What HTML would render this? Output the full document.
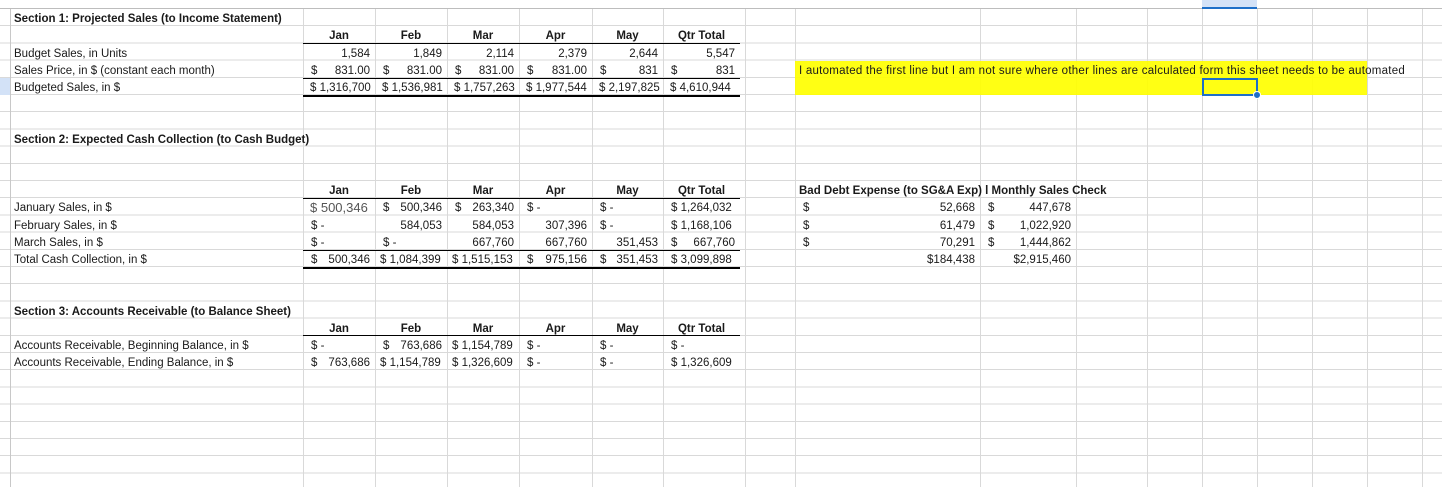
<!DOCTYPE html>
<html><head><meta charset="utf-8"><style>
*{margin:0;padding:0;box-sizing:border-box}
body{width:1442px;height:487px;overflow:hidden;background:#fff;position:relative;font-family:"Liberation Sans",sans-serif;font-size:11.5px;color:#1a1a1a}
.v{position:absolute;top:0;width:1px;height:487px;background:#d9d9d9}
.grid{position:absolute;left:0;top:9.2px;width:1442px;height:480px;background:repeating-linear-gradient(to bottom,transparent 0,transparent 16.2px,#d9d9d9 16.2px,#d9d9d9 17.2px)}
.c{position:absolute;height:17px;line-height:20px;padding:0 5px 0 8px;white-space:nowrap}
.l{padding-left:4px}
.r{text-align:right}.ctr{text-align:center;padding:0 3px}
.b{font-weight:bold}
.a{display:flex;justify-content:space-between}
.h{position:absolute;height:1px;background:#000}
</style></head><body>
<div class="grid"></div>
<div class="v" style="left:10px;background:#c8c8c8"></div>
<div class="v" style="left:303px"></div><div class="v" style="left:375px"></div><div class="v" style="left:447px"></div><div class="v" style="left:519px"></div><div class="v" style="left:592px"></div><div class="v" style="left:663px"></div><div class="v" style="left:745px"></div><div class="v" style="left:795px"></div><div class="v" style="left:980px"></div><div class="v" style="left:1076px"></div><div class="v" style="left:1147px"></div><div class="v" style="left:1202px"></div><div class="v" style="left:1257px"></div><div class="v" style="left:1312px"></div><div class="v" style="left:1367px"></div><div class="v" style="left:1422px"></div>
<div style="position:absolute;left:0;top:0;width:1442px;height:9px;background:#fff;border-bottom:1px solid #bdbdbd"></div>
<div style="position:absolute;left:1202px;top:0;width:55px;height:9px;background:#d3e2f7;border-bottom:2px solid #1e6fc8"></div>
<div style="position:absolute;left:0;top:78px;width:10px;height:17px;background:#d3e2f7"></div>
<div style="position:absolute;left:795px;top:61px;width:572px;height:34px;background:rgba(255,255,0,0.92)"></div>
<div style="position:absolute;left:1202px;top:78px;width:56px;height:18px;border:2px solid #1e6fc8"></div>
<div style="position:absolute;left:1253px;top:91px;width:8px;height:8px;border-radius:50%;background:#1e6fc8;border:1px solid #fff"></div>

<div class="c b l" style="left:10px;top:9.2px">Section 1: Projected Sales (to Income Statement)</div>
<div class="c b ctr" style="left:303px;top:26.4px;width:72px">Jan</div>
<div class="c b ctr" style="left:375px;top:26.4px;width:72px">Feb</div>
<div class="c b ctr" style="left:447px;top:26.4px;width:72px">Mar</div>
<div class="c b ctr" style="left:519px;top:26.4px;width:73px">Apr</div>
<div class="c b ctr" style="left:592px;top:26.4px;width:71px">May</div>
<div class="c b ctr" style="left:663px;top:26.4px;width:77px">Qtr Total</div>
<div class="h" style="left:303px;width:437px;top:42.6px"></div>
<div class="c l" style="left:10px;top:43.6px">Budget Sales, in Units</div>
<div class="c r" style="left:303px;top:43.6px;width:72px">1,584</div>
<div class="c r" style="left:375px;top:43.6px;width:72px">1,849</div>
<div class="c r" style="left:447px;top:43.6px;width:72px">2,114</div>
<div class="c r" style="left:519px;top:43.6px;width:73px">2,379</div>
<div class="c r" style="left:592px;top:43.6px;width:71px">2,644</div>
<div class="c r" style="left:663px;top:43.6px;width:77px">5,547</div>
<div class="c l" style="left:10px;top:60.8px">Sales Price, in $ (constant each month)</div>
<div class="c a" style="left:303px;top:60.8px;width:72px"><span>$</span><span>831.00</span></div>
<div class="c a" style="left:375px;top:60.8px;width:72px"><span>$</span><span>831.00</span></div>
<div class="c a" style="left:447px;top:60.8px;width:72px"><span>$</span><span>831.00</span></div>
<div class="c a" style="left:519px;top:60.8px;width:73px"><span>$</span><span>831.00</span></div>
<div class="c a" style="left:592px;top:60.8px;width:71px"><span>$</span><span>831</span></div>
<div class="c a" style="left:663px;top:60.8px;width:77px"><span>$</span><span>831</span></div>
<div class="c l" style="left:795px;top:60.8px;letter-spacing:0.25px">I automated the first line but I am not sure where other lines are calculated form this sheet needs to be automated</div>
<div class="h" style="left:303px;width:437px;top:77.6px"></div>
<div class="c l" style="left:10px;top:78px">Budgeted Sales, in $</div>
<div class="c" style="left:303px;top:78px;padding-left:7px">$ 1,316,700</div>
<div class="c" style="left:375px;top:78px;padding-left:7px">$ 1,536,981</div>
<div class="c" style="left:447px;top:78px;padding-left:7px">$ 1,757,263</div>
<div class="c" style="left:519px;top:78px;padding-left:7px">$ 1,977,544</div>
<div class="c" style="left:592px;top:78px;padding-left:7px">$ 2,197,825</div>
<div class="c" style="left:663px;top:78px;padding-left:7px">$ 4,610,944</div>
<div class="h" style="left:303px;width:437px;top:94.5px;height:2px"></div>

<div class="c b l" style="left:10px;top:129.6px">Section 2: Expected Cash Collection (to Cash Budget)</div>
<div class="c b ctr" style="left:303px;top:181.2px;width:72px">Jan</div>
<div class="c b ctr" style="left:375px;top:181.2px;width:72px">Feb</div>
<div class="c b ctr" style="left:447px;top:181.2px;width:72px">Mar</div>
<div class="c b ctr" style="left:519px;top:181.2px;width:73px">Apr</div>
<div class="c b ctr" style="left:592px;top:181.2px;width:71px">May</div>
<div class="c b ctr" style="left:663px;top:181.2px;width:77px">Qtr Total</div>
<div class="h" style="left:303px;width:437px;top:197.6px"></div>
<div class="c b l" style="left:795px;top:181.2px">Bad Debt Expense (to SG&amp;A Exp) l Monthly Sales Check</div>

<div class="c l" style="left:10px;top:198.4px">January Sales, in $</div>
<div class="c" style="left:303px;top:198.4px;font-size:13px;color:#555;padding-left:7px">$ 500,346</div>
<div class="c a" style="left:375px;top:198.4px;width:72px"><span>$</span><span>500,346</span></div>
<div class="c a" style="left:447px;top:198.4px;width:72px"><span>$</span><span>263,340</span></div>
<div class="c" style="left:519px;top:198.4px">$ -</div>
<div class="c" style="left:592px;top:198.4px">$ -</div>
<div class="c" style="left:663px;top:198.4px">$ 1,264,032</div>
<div class="c a" style="left:795px;top:198.4px;width:185px"><span>$</span><span>52,668</span></div>
<div class="c a" style="left:980px;top:198.4px;width:96px"><span>$</span><span>447,678</span></div>

<div class="c l" style="left:10px;top:215.6px">February Sales, in $</div>
<div class="c" style="left:303px;top:215.6px">$ -</div>
<div class="c r" style="left:375px;top:215.6px;width:72px">584,053</div>
<div class="c r" style="left:447px;top:215.6px;width:72px">584,053</div>
<div class="c r" style="left:519px;top:215.6px;width:73px">307,396</div>
<div class="c" style="left:592px;top:215.6px">$ -</div>
<div class="c" style="left:663px;top:215.6px">$ 1,168,106</div>
<div class="c a" style="left:795px;top:215.6px;width:185px"><span>$</span><span>61,479</span></div>
<div class="c a" style="left:980px;top:215.6px;width:96px"><span>$</span><span>1,022,920</span></div>

<div class="c l" style="left:10px;top:232.8px">March Sales, in $</div>
<div class="c" style="left:303px;top:232.8px">$ -</div>
<div class="c" style="left:375px;top:232.8px">$ -</div>
<div class="c r" style="left:447px;top:232.8px;width:72px">667,760</div>
<div class="c r" style="left:519px;top:232.8px;width:73px">667,760</div>
<div class="c r" style="left:592px;top:232.8px;width:71px">351,453</div>
<div class="c a" style="left:663px;top:232.8px;width:77px"><span>$</span><span>667,760</span></div>
<div class="c a" style="left:795px;top:232.8px;width:185px"><span>$</span><span>70,291</span></div>
<div class="c a" style="left:980px;top:232.8px;width:96px"><span>$</span><span>1,444,862</span></div>
<div class="h" style="left:303px;width:437px;top:249.5px"></div>

<div class="c l" style="left:10px;top:250px">Total Cash Collection, in $</div>
<div class="c a" style="left:303px;top:250px;width:72px"><span>$</span><span>500,346</span></div>
<div class="c" style="left:375px;top:250px;padding-left:5px">$ 1,084,399</div>
<div class="c" style="left:447px;top:250px;padding-left:5px">$ 1,515,153</div>
<div class="c a" style="left:519px;top:250px;width:73px"><span>$</span><span>975,156</span></div>
<div class="c a" style="left:592px;top:250px;width:71px"><span>$</span><span>351,453</span></div>
<div class="c" style="left:663px;top:250px">$ 3,099,898</div>
<div class="c r" style="left:795px;top:250px;width:185px">$184,438</div>
<div class="c r" style="left:980px;top:250px;width:96px">$2,915,460</div>
<div class="h" style="left:303px;width:437px;top:266.5px;height:2px"></div>

<div class="c b l" style="left:10px;top:301.6px">Section 3: Accounts Receivable (to Balance Sheet)</div>
<div class="c b ctr" style="left:303px;top:318.8px;width:72px">Jan</div>
<div class="c b ctr" style="left:375px;top:318.8px;width:72px">Feb</div>
<div class="c b ctr" style="left:447px;top:318.8px;width:72px">Mar</div>
<div class="c b ctr" style="left:519px;top:318.8px;width:73px">Apr</div>
<div class="c b ctr" style="left:592px;top:318.8px;width:71px">May</div>
<div class="c b ctr" style="left:663px;top:318.8px;width:77px">Qtr Total</div>
<div class="h" style="left:303px;width:437px;top:335px"></div>
<div class="c l" style="left:10px;top:336px">Accounts Receivable, Beginning Balance, in $</div>
<div class="c" style="left:303px;top:336px">$ -</div>
<div class="c a" style="left:375px;top:336px;width:72px"><span>$</span><span>763,686</span></div>
<div class="c" style="left:447px;top:336px;padding-left:5px">$ 1,154,789</div>
<div class="c" style="left:519px;top:336px">$ -</div>
<div class="c" style="left:592px;top:336px">$ -</div>
<div class="c" style="left:663px;top:336px">$ -</div>
<div class="c l" style="left:10px;top:353.2px">Accounts Receivable, Ending Balance, in $</div>
<div class="c a" style="left:303px;top:353.2px;width:72px"><span>$</span><span>763,686</span></div>
<div class="c" style="left:375px;top:353.2px;padding-left:5px">$ 1,154,789</div>
<div class="c" style="left:447px;top:353.2px;padding-left:5px">$ 1,326,609</div>
<div class="c" style="left:519px;top:353.2px">$ -</div>
<div class="c" style="left:592px;top:353.2px">$ -</div>
<div class="c" style="left:663px;top:353.2px">$ 1,326,609</div>
</body></html>
